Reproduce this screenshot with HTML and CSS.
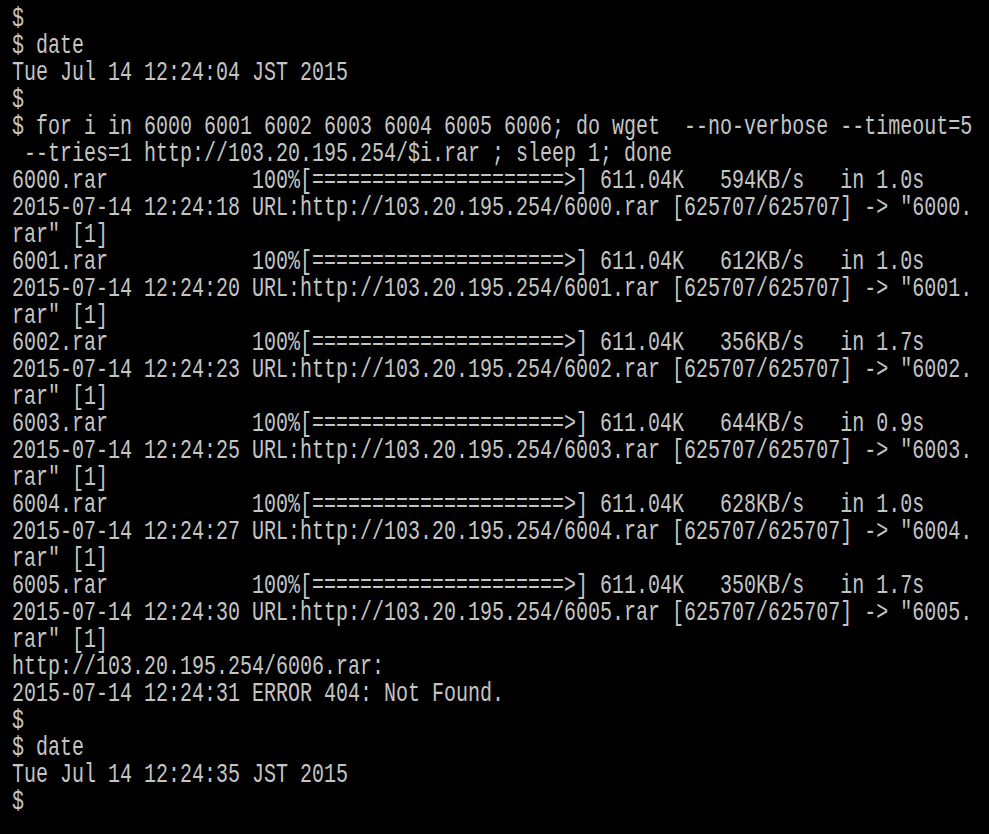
FILE: index.html
```html
<!DOCTYPE html>
<html>
<head>
<meta charset="utf-8">
<link rel="stylesheet" href="styles.css">
</head>
<body>
<div class="console">
<pre class="screen">$
$ date
Tue Jul 14 12:24:04 JST 2015
$
$ for i in 6000 6001 6002 6003 6004 6005 6006; do wget  --no-verbose --timeout=5
 --tries=1 http://103.20.195.254/$i.rar ; sleep 1; done
6000.rar            100%[=====================>] 611.04K   594KB/s   in 1.0s
2015-07-14 12:24:18 URL:http://103.20.195.254/6000.rar [625707/625707] -> "6000.
rar" [1]
6001.rar            100%[=====================>] 611.04K   612KB/s   in 1.0s
2015-07-14 12:24:20 URL:http://103.20.195.254/6001.rar [625707/625707] -> "6001.
rar" [1]
6002.rar            100%[=====================>] 611.04K   356KB/s   in 1.7s
2015-07-14 12:24:23 URL:http://103.20.195.254/6002.rar [625707/625707] -> "6002.
rar" [1]
6003.rar            100%[=====================>] 611.04K   644KB/s   in 0.9s
2015-07-14 12:24:25 URL:http://103.20.195.254/6003.rar [625707/625707] -> "6003.
rar" [1]
6004.rar            100%[=====================>] 611.04K   628KB/s   in 1.0s
2015-07-14 12:24:27 URL:http://103.20.195.254/6004.rar [625707/625707] -> "6004.
rar" [1]
6005.rar            100%[=====================>] 611.04K   350KB/s   in 1.7s
2015-07-14 12:24:30 URL:http://103.20.195.254/6005.rar [625707/625707] -> "6005.
rar" [1]
http://103.20.195.254/6006.rar:
2015-07-14 12:24:31 ERROR 404: Not Found.
$
$ date
Tue Jul 14 12:24:35 JST 2015
$</pre>
</div>
</body>
</html>
```
FILE: styles.css
```css
html, body {
  margin: 0;
  padding: 0;
  background: #000;
  height: 100%;
  overflow: hidden;
}
.console {
  padding: 6px 0 0 12px;
}
.screen {
  margin: 0;
  font-family: "Liberation Mono", monospace;
  font-size: 20px;
  line-height: 20px;
  color: #c4c4c4;
  white-space: pre;
  transform: scaleY(1.35);
  transform-origin: 0 0;
}
```
